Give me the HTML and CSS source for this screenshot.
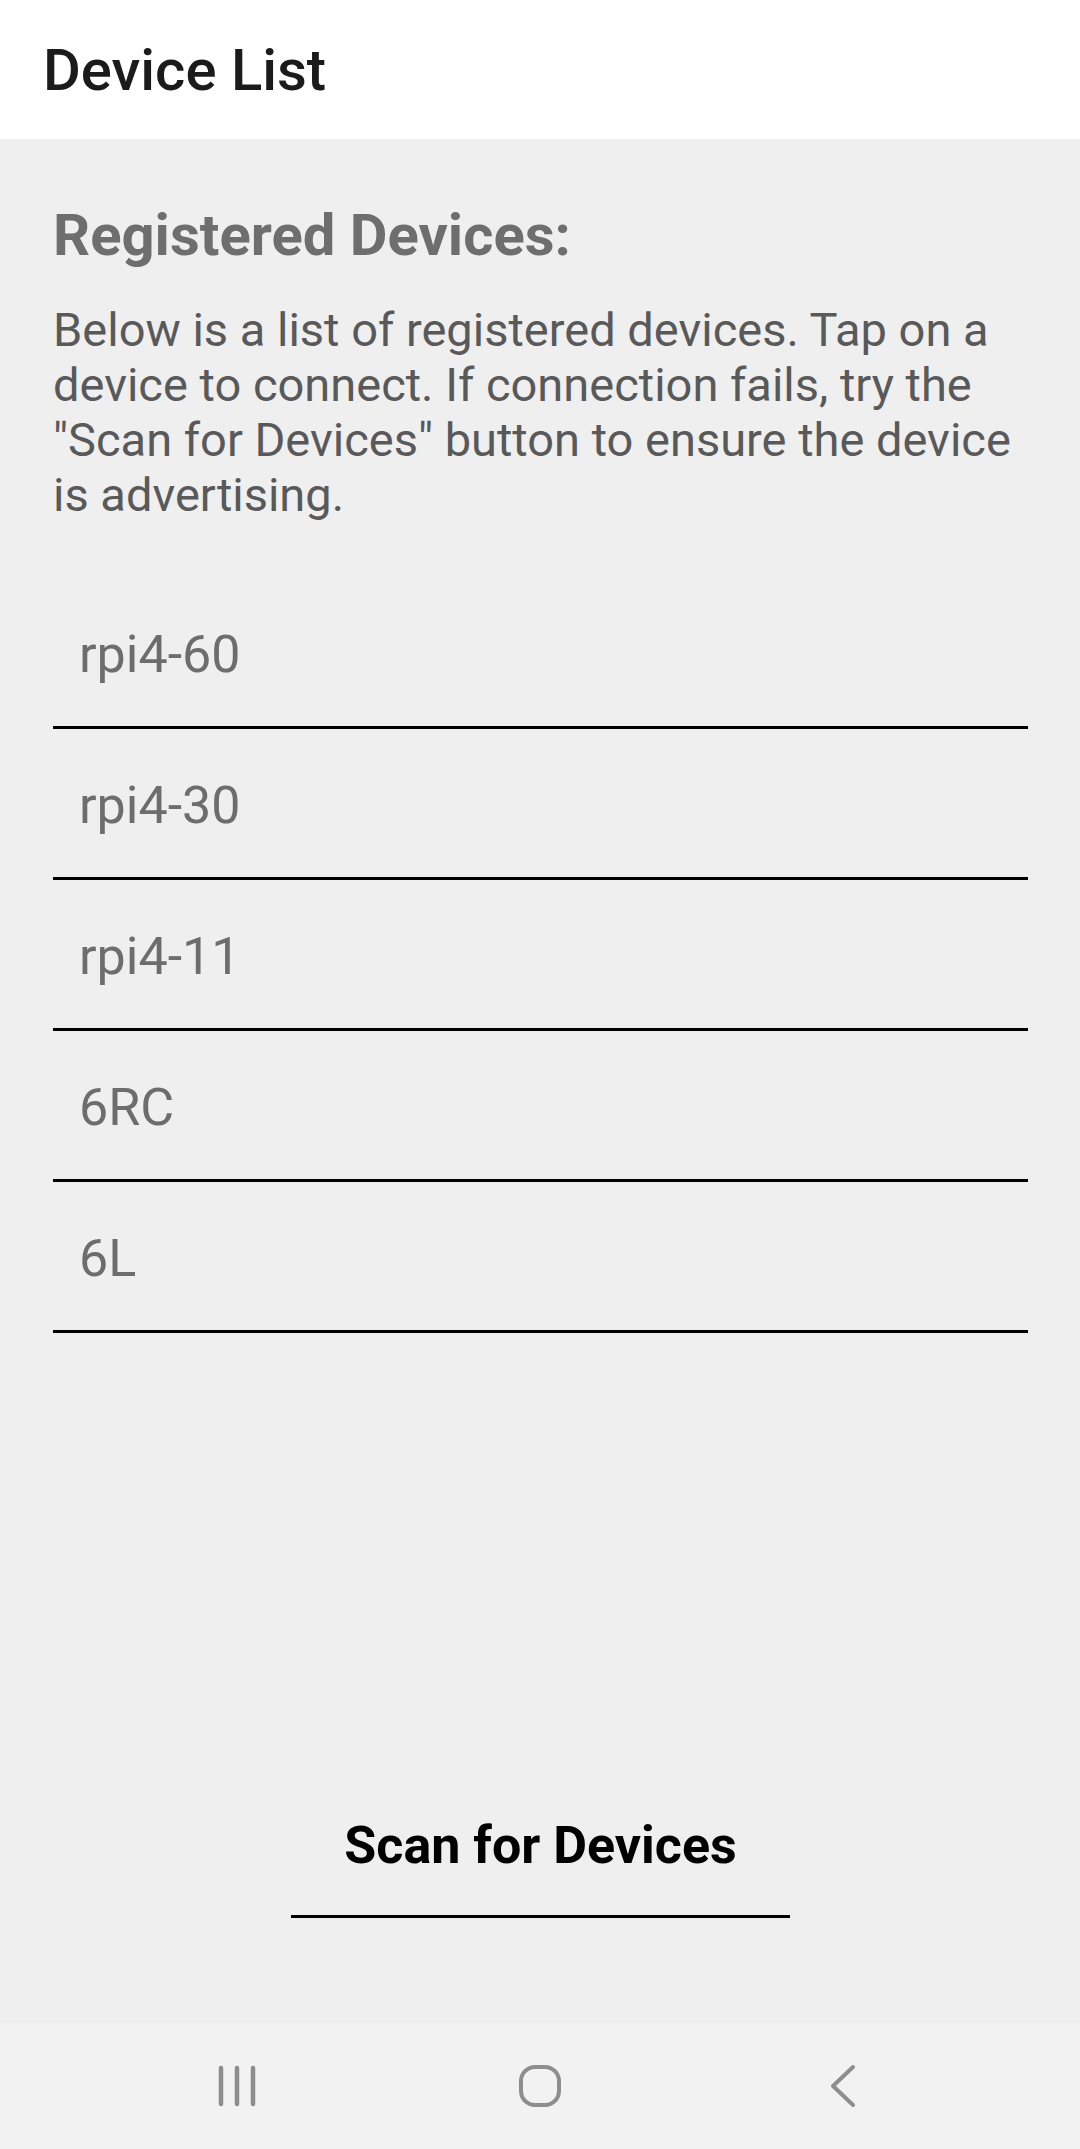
FILE: index.html
```html
<!DOCTYPE html>
<html lang="en">
<head>
<meta charset="utf-8">
<title>Device List</title>
<link rel="stylesheet" href="styles.css">
</head>
<body>
<div class="screen">
  <header class="appbar">Device List</header>
  <main class="content">
    <h1 class="heading">Registered Devices:</h1>
    <p class="intro">Below is a list of registered devices. Tap on a device to connect. If connection fails, try the "Scan for Devices" button to ensure the device is advertising.</p>
    <ul class="devices">
      <li class="device">rpi4-60</li>
      <li class="device">rpi4-30</li>
      <li class="device">rpi4-11</li>
      <li class="device">6RC</li>
      <li class="device">6L</li>
    </ul>
    <div class="actions">
      <button class="scan">Scan for Devices</button>
    </div>
  </main>
  <nav class="navbar">
    <span class="nav-item">
      <svg width="44" height="44" viewBox="0 0 44 44"><g stroke="#8e8e8e" stroke-width="4.5" stroke-linecap="round" fill="none"><line x1="6" y1="4" x2="6" y2="40"/><line x1="22" y1="4" x2="22" y2="40"/><line x1="38" y1="4" x2="38" y2="40"/></g></svg>
    </span>
    <span class="nav-item">
      <svg width="46" height="46" viewBox="0 0 46 46"><rect x="4" y="4" width="38" height="38" rx="14" ry="14" stroke="#8e8e8e" stroke-width="4" fill="none"/></svg>
    </span>
    <span class="nav-item">
      <svg width="30" height="46" viewBox="0 0 30 46"><polyline points="25,4 5,23 25,42" stroke="#8e8e8e" stroke-width="4" stroke-linecap="round" stroke-linejoin="round" fill="none"/></svg>
    </span>
  </nav>
</div>
</body>
</html>
```
FILE: styles.css
```css
* { box-sizing: border-box; }
html, body { margin: 0; padding: 0; }
body {
  background: #efefef;
  font-family: Roboto, "Noto Sans", "Liberation Sans", sans-serif;
}
.screen {
  width: 1080px;
  height: 2149px;
  display: flex;
  flex-direction: column;
  background: #efefef;
}
.appbar {
  height: 139px;
  flex: none;
  background: #ffffff;
  display: flex;
  align-items: center;
  padding-left: 43px;
  font-size: 58px;
  font-weight: 500;
  color: #1b1b1b;
}
.content {
  flex: 1;
  display: flex;
  flex-direction: column;
  padding: 62px 52px 0 53px;
}
.heading {
  margin: 0;
  font-size: 58px;
  font-weight: 700;
  line-height: normal;
  color: #6e6e6e;
}
.intro {
  margin: 33px 0 0;
  font-size: 47px;
  line-height: 55px;
  color: #595959;
}
.devices {
  list-style: none;
  margin: 56px 0 0;
  padding: 0;
}
.device {
  height: 151px;
  border-bottom: 3px solid #000;
  display: flex;
  align-items: center;
  padding: 4px 0 0 26px;
  font-size: 52px;
  color: #6d6d6d;
}
.actions {
  margin-top: auto;
  margin-bottom: 105px;
  display: flex;
  justify-content: center;
}
.scan {
  width: 499px;
  background: none;
  border: none;
  border-bottom: 3px solid #000;
  padding: 0 0 39px;
  font-family: Roboto, "Noto Sans", "Liberation Sans", sans-serif;
  font-size: 52px;
  font-weight: 700;
  line-height: normal;
  color: #000;
}
.navbar {
  height: 126px;
  flex: none;
  background: #f2f2f2;
  display: flex;
  justify-content: center;
  align-items: center;
}
.nav-item {
  width: 303px;
  display: flex;
  justify-content: center;
  align-items: center;
}
```
